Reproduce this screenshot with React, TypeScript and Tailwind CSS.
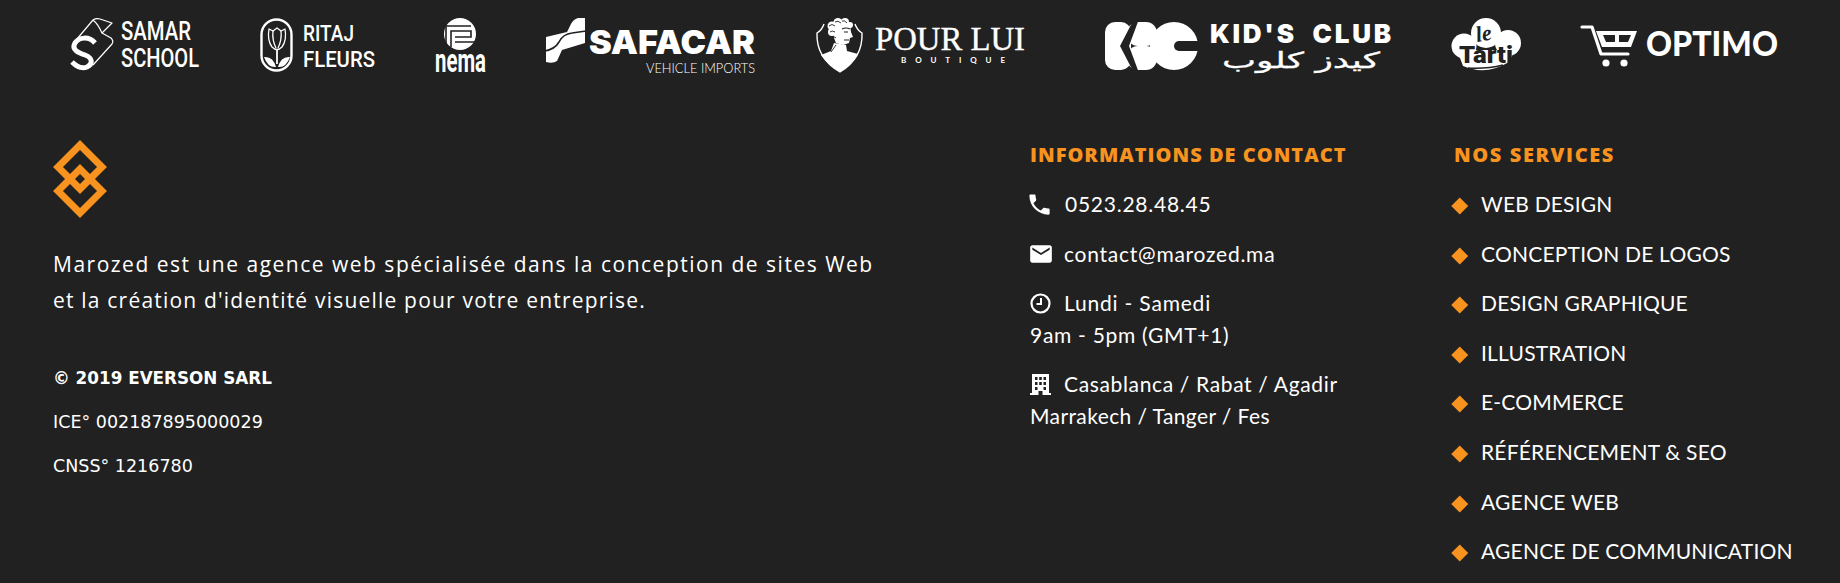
import React from 'react';
import { MdPhone, MdEmail } from 'react-icons/md';

const BG = '#212121';

const services = [
  'WEB DESIGN',
  'CONCEPTION DE LOGOS',
  'DESIGN GRAPHIQUE',
  'ILLUSTRATION',
  'E-COMMERCE',
  'RÉFÉRENCEMENT & SEO',
  'AGENCE WEB',
  'AGENCE DE COMMUNICATION',
];

const SamarLogo = () => (
  <svg width="130" height="54" viewBox="0 0 130 54" className="shrink-0 overflow-visible">
    <g fill="none" stroke="#fff" strokeWidth="1.2" strokeLinejoin="round">
      <path d="M8 21 L24 2 Q27 0 31 1 L43 5 L33 15 L42 20 Q45 23 43 26 L24 47" />
      <path d="M24 2 Q29 6 33 15" />
    </g>
    <path d="M26 25 C20 18 10 19 6 25 C2 32 10 35 16 37 C24 40 24 46 18 49 C13 51 8 49 3 44" fill="none" stroke="#fff" strokeWidth="5" />
    <g fill="#fff" fontFamily="Roboto, sans-serif" fontWeight="500">
      <text x="52" y="22" fontSize="26" textLength="70" lengthAdjust="spacingAndGlyphs">SAMAR</text>
      <text x="52" y="49" fontSize="26" textLength="78" lengthAdjust="spacingAndGlyphs">SCHOOL</text>
    </g>
  </svg>
);

const RitajLogo = () => (
  <svg width="116" height="54" viewBox="0 0 116 54" className="shrink-0 overflow-visible">
    <rect x="1.5" y="1.5" width="30" height="51" rx="15" fill="none" stroke="#fff" strokeWidth="2.4" />
    <g fill="none" stroke="#fff" strokeWidth="1.3" strokeLinejoin="round">
      <path d="M9 11 L13 13 L17 10 L21 13 L25 11 Q27 22 22 29 Q17 34 12 29 Q7 22 9 11 Z" />
      <path d="M13 13 Q12 22 16 30 M21 13 Q22 22 18 30" />
      <path d="M17 32 V46" strokeWidth="1.8" />
    </g>
    <path d="M4 39 Q13 38 16 49 Q8 50 4 39 Z M30 39 Q21 38 18 49 Q26 50 30 39 Z" fill="#fff" />
    <g fill="#fff" fontFamily="Roboto, sans-serif" fontWeight="500">
      <text x="43" y="23" fontSize="22" textLength="51" lengthAdjust="spacingAndGlyphs">RITAJ</text>
      <text x="43" y="49" fontSize="22" textLength="72" lengthAdjust="spacingAndGlyphs">FLEURS</text>
    </g>
  </svg>
);

const NemaLogo = () => (
  <svg width="52" height="56" viewBox="0 0 52 56" className="shrink-0 overflow-visible">
    <circle cx="25" cy="16" r="16" fill="#fff" />
    <path d="M11 29 V8 H36 M16 29 V13 H36 V19 H20 M20 24 H41" fill="none" stroke={BG} strokeWidth="1.6" />
    <text x="0" y="54" fill="#fff" fontFamily="Roboto, sans-serif" fontWeight="700" fontSize="33" textLength="51" lengthAdjust="spacingAndGlyphs">nema</text>
  </svg>
);

const SafacarLogo = () => (
  <svg width="212" height="58" viewBox="0 0 212 58" className="shrink-0 overflow-visible">
    <path d="M40 0 H33 Q28 1 25 8 L22 14 L1 19 V44 Q8 46 12 43 L17 32 L40 25 Z" fill="#fff" />
    <path d="M0 33 Q10 31 14 24 Q18 16 27 15 L41 13" fill="none" stroke={BG} strokeWidth="1.6" />
    <text x="44" y="36" fill="#fff" fontFamily="Inter, sans-serif" fontWeight="900" fontSize="33" textLength="166" lengthAdjust="spacingAndGlyphs">SAFACAR</text>
    <text x="101" y="55" fill="#fff" fontFamily="Lato, sans-serif" fontWeight="300" fontSize="14" textLength="109" lengthAdjust="spacingAndGlyphs">VEHICLE IMPORTS</text>
  </svg>
);

const PourLuiLogo = () => (
  <svg width="210" height="56" viewBox="0 0 210 56" className="shrink-0 overflow-visible">
    <path d="M8 6 Q6 12 1 15 Q0 40 24 54 Q47 40 46 15 Q41 12 39 6" fill="none" stroke="#fff" strokeWidth="1.4" />
    <path d="M5 37 L15 33 L18 25 L30 27 L31 33 L42 36 Q36 47 24 54 Q12 47 5 37 Z" fill="#fff" />
    <g fill="#fff">
      <circle cx="16" cy="8" r="4.5" />
      <circle cx="22" cy="4.5" r="4.5" />
      <circle cx="29" cy="4" r="4" />
      <circle cx="34" cy="7" r="3" />
      <circle cx="16" cy="14" r="4" />
      <path d="M17 6 H34 L35 14 L37 19 L34 20 L33 25 L27 27 L20 25 L18 20 Z" />
    </g>
    <path d="M13 8 Q16 5 19 8 M19 4 Q22 2 25 5 M26 3 Q29 2 31 5 M14 14 Q16 12 19 14 M16 19 Q18 18 20 20" fill="none" stroke={BG} strokeWidth="0.9" />
    <path d="M26 11 Q30 9 34 11 M28 14 H32 M28 22 H33" fill="none" stroke={BG} strokeWidth="1.1" />
    <path d="M20 27 L15 34" stroke={BG} strokeWidth="0.9" />
    <text x="59" y="32" fill="#fff" stroke="#fff" strokeWidth="0.4" fontFamily="'Liberation Serif', serif" fontSize="33" textLength="150" lengthAdjust="spacingAndGlyphs">POUR LUI</text>
    <text x="85" y="45" fill="#fff" fontFamily="Lato, sans-serif" fontWeight="700" fontSize="8" textLength="104" lengthAdjust="spacing">BOUTIQUE</text>
  </svg>
);

const KidsClubLogo = () => (
  <svg width="287" height="54" viewBox="0 0 287 54" className="shrink-0 overflow-visible">
    <g fill="#fff">
      <rect x="0" y="4" width="26" height="48" rx="10" />
      <rect x="22" y="4" width="30" height="24" rx="11" />
      <rect x="22" y="28" width="30" height="24" rx="11" />
      <circle cx="69" cy="28" r="24" />
    </g>
    <path d="M29 1 L15 28 L29 55 L34 55 L24 28 L34 1 Z" fill={BG} />
    <path d="M74 28 H95" stroke={BG} strokeWidth="10" strokeLinecap="round" />
    <text x="105" y="25" fill="#fff" fontFamily="Inter, sans-serif" fontWeight="900" fontSize="26" textLength="181" lengthAdjust="spacing">KID'S{'\u00a0\u00a0'}CLUB</text>
    <text x="117" y="50" fill="#fff" stroke="#fff" strokeWidth="0.3" fontFamily="'DejaVu Sans', sans-serif" fontSize="22" textLength="158" lengthAdjust="spacingAndGlyphs">كيدز كلوب</text>
  </svg>
);

const TartiLogo = () => (
  <svg width="70" height="54" viewBox="0 0 70 54" className="shrink-0 overflow-visible">
    <g fill="#fff">
      <circle cx="13" cy="28" r="12.5" />
      <circle cx="35" cy="15" r="15" />
      <circle cx="57" cy="25" r="13" />
      <path d="M6 32 H64 L58 44 Q35 58 12 48 Z" />
    </g>
    <g fill={BG} fontWeight="700">
      <text x="26" y="24" fontFamily="'Liberation Serif', serif" fontSize="22" fontStyle="italic" transform="rotate(-10 26 24)">le</text>
      <text x="8" y="45" fontFamily="Roboto, sans-serif" fontWeight="900" fontSize="24" textLength="54" lengthAdjust="spacingAndGlyphs">Tarti</text>
    </g>
    <path d="M17 50 Q36 51 52 47" fill="none" stroke={BG} strokeWidth="1.5" />
  </svg>
);

const OptimoLogo = () => (
  <svg width="198" height="54" viewBox="0 0 198 54" className="shrink-0 overflow-visible">
    <path d="M1 9 H11 L20 36 H47" fill="none" stroke="#fff" strokeWidth="3.2" strokeLinecap="round" strokeLinejoin="round" />
    <path d="M15 13 H56 L50 29 H21 Z" fill="#fff" />
    <path d="M22 17 H34 V24 H25 Z M38 17 H50 L47 24 H38 Z" fill={BG} />
    <circle cx="25" cy="45" r="3.6" fill="#fff" />
    <circle cx="43" cy="45" r="3.6" fill="#fff" />
    <text x="65" y="38" fill="#fff" fontFamily="Lato, sans-serif" fontWeight="900" fontSize="35" textLength="132" lengthAdjust="spacingAndGlyphs">OPTIMO</text>
  </svg>
);

const BrandMark = () => (
  <svg width="54" height="78" viewBox="0 0 54 78" className="block">
    <g fill="none" stroke="#f7931e" strokeWidth="7" strokeLinejoin="miter">
      <path d="M27 5 L49 27 L27 49 L5 27 Z" />
      <path d="M27 29 L49 51 L27 73 L5 51 Z" />
    </g>
  </svg>
);

const ClockIcon = () => (
  <svg width="21" height="21" viewBox="0 0 21 21" className="shrink-0">
    <circle cx="10.5" cy="10.5" r="9" fill="none" stroke="#fff" strokeWidth="2.2" />
    <path d="M11 5 V11 H6.5" fill="none" stroke="#fff" strokeWidth="2" />
  </svg>
);

const BuildingIcon = () => (
  <svg width="21" height="21" viewBox="0 0 21 21" className="shrink-0">
    <path
      fillRule="evenodd"
      fill="#fff"
      d="M2 0 H19 V19 H21 V21 H12.5 V17 H8.5 V21 H0 V19 H2 Z M5 3 V6 H7.5 V3 Z M9.2 3 V6 H11.8 V3 Z M13.5 3 V6 H16 V3 Z M5 8 V11 H7.5 V8 Z M9.2 8 V11 H11.8 V8 Z M13.5 8 V11 H16 V8 Z M5 13 V16 H7.5 V13 Z M13.5 13 V16 H16 V13 Z"
    />
  </svg>
);

const App = () => {
  return (
    <div className="min-h-[583px] overflow-hidden bg-[#212121] text-white font-['Lato',sans-serif]">
      <div className="flex h-[140px] items-start pt-[18px] pl-[69px]">
        <SamarLogo />
        <div className="ml-[61px]"><RitajLogo /></div>
        <div className="ml-[59px]"><NemaLogo /></div>
        <div className="ml-[58px]"><SafacarLogo /></div>
        <div className="ml-[59px]"><PourLuiLogo /></div>
        <div className="ml-[79px]"><KidsClubLogo /></div>
        <div className="ml-[59px]"><TartiLogo /></div>
        <div className="ml-[60px]"><OptimoLogo /></div>
      </div>

      <div className="flex">
        <div className="w-[1030px] pl-[53px]">
          <BrandMark />
          <p className="mt-[28px] font-['Open_Sans',sans-serif] text-[21px] leading-[36px]">
            <span className="block tracking-[1.5px]">Marozed est une agence web spécialisée dans la conception de sites Web</span>
            <span className="block tracking-[1.2px]">et la création d'identité visuelle pour votre entreprise.</span>
          </p>
          <p className="mt-[48px] font-['DejaVu_Sans',sans-serif] text-[16.8px] leading-[24px] font-bold">© 2019 EVERSON SARL</p>
          <p className="mt-[20px] font-['DejaVu_Sans',sans-serif] text-[17.5px] leading-[24px]">ICE° 002187895000029</p>
          <p className="mt-[20px] font-['DejaVu_Sans',sans-serif] text-[17.5px] leading-[24px]">CNSS° 1216780</p>
        </div>

        <div className="w-[424px]">
          <h3 className="font-['Open_Sans',sans-serif] text-[20px] leading-[30px] font-extrabold tracking-[1px] text-[#f7931e]">INFORMATIONS DE CONTACT</h3>
          <div className="mt-[18px] flex h-[32px] items-center text-[21px] tracking-[0.75px]">
            <MdPhone size={27} className="shrink-0 -ml-[4px]" />
            <span className="ml-[12px]">0523.28.48.45</span>
          </div>
          <div className="mt-[18px] flex h-[32px] items-center text-[21px] tracking-[0.75px]">
            <MdEmail size={26} className="shrink-0 -ml-[2px]" />
            <span className="ml-[10px]">contact@marozed.ma</span>
          </div>
          <div className="mt-[17px] text-[21px] leading-[32px]">
            <div className="flex items-center gap-[13px] tracking-[0.8px]">
              <ClockIcon />
              <span>Lundi - Samedi</span>
            </div>
            <div className="tracking-[0.7px]">9am - 5pm (GMT+1)</div>
          </div>
          <div className="mt-[17px] text-[21px] leading-[32px]">
            <div className="flex items-center gap-[13px] tracking-[0.65px]">
              <BuildingIcon />
              <span>Casablanca / Rabat / Agadir</span>
            </div>
            <div className="tracking-[0.4px]">Marrakech / Tanger / Fes</div>
          </div>
        </div>

        <div className="flex-1">
          <h3 className="font-['Open_Sans',sans-serif] text-[20px] leading-[30px] font-extrabold tracking-[1.6px] text-[#f7931e]">NOS SERVICES</h3>
          <ul className="mt-[9px]">
            {services.map((service) => (
              <li key={service} className="flex h-[49.6px] items-center text-[21px] tracking-[0.2px]">
                <span className="mt-[4px] h-[11.5px] w-[11.5px] shrink-0 rotate-45 bg-[#f7931e]" />
                <span className="ml-[15.5px] whitespace-nowrap">{service}</span>
              </li>
            ))}
          </ul>
        </div>
      </div>
    </div>
  );
};

export default App;
